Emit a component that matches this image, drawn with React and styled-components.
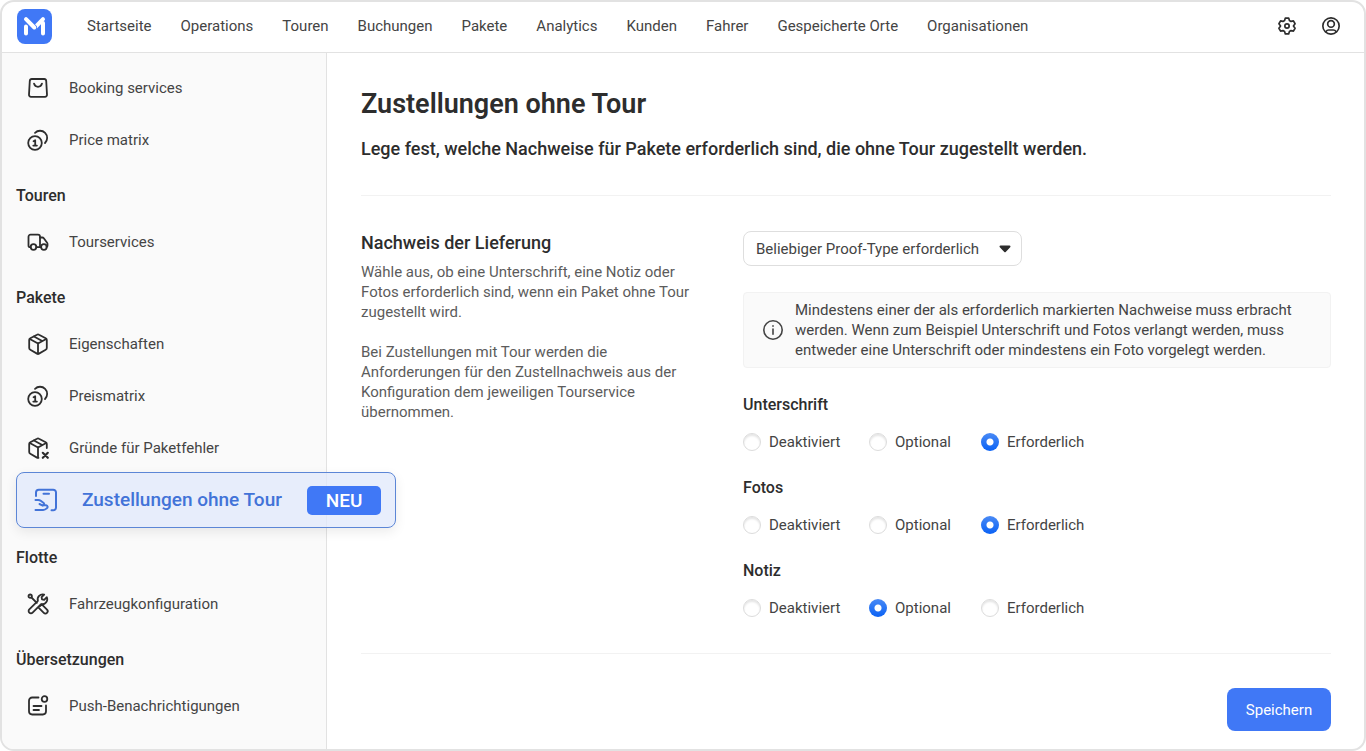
import React, {useState} from 'react'

// UI & CSS
import styled, {createGlobalStyle} from "styled-components";

const NAV_LINKS = [
  'Startseite', 'Operations', 'Touren', 'Buchungen', 'Pakete',
  'Analytics', 'Kunden', 'Fahrer', 'Gespeicherte Orte', 'Organisationen'
];

const PROOF_OPTIONS = ['Deaktiviert', 'Optional', 'Erforderlich'];

const Icon = ({size = 24, stroke = 1.8, children}) => (
  <IconSvg
    width={size}
    height={size}
    viewBox='0 0 24 24'
    strokeWidth={stroke}
    aria-hidden='true'
  >
    {children}
  </IconSvg>
)

const BagIcon = () => (
  <Icon>
    <path d='M5.800 3h12.400a2 2 0 0 1 2 1.800l.8 13.800a2 2 0 0 1-2 2.200H5a2 2 0 0 1-2-2.200l.8-13.800a2 2 0 0 1 2-1.800z'/>
    <path d='M8 7.600c.6 2 2 3.200 4 3.200s3.400-1.200 4-3.200'/>
  </Icon>
)

const CoinsIcon = () => (
  <Icon>
    <circle cx='9' cy='15' r='6.8'/>
    <path d='M9 4.800a6.800 6.800 0 1 1 10 10.200'/>
    <path d='M7.500 13.200l1.700-.9v5.300M7.300 17.600h3.600'/>
  </Icon>
)

const TruckIcon = () => (
  <Icon>
    <path d='M4.600 17.200h-.3a1.800 1.800 0 0 1-1.800-1.800V6.700a2 2 0 0 1 2-2H12a2 2 0 0 1 2 2v10.500M10.400 17.200h4.600'/>
    <path d='M14 7.500h2.200a2 2 0 0 1 1.600.8l3.300 4.400a2 2 0 0 1 .4 1.200v1.500a1.800 1.800 0 0 1-.9 1.600'/>
    <circle cx='7.5' cy='17' r='2.8'/>
    <circle cx='17.9' cy='17' r='2.8'/>
  </Icon>
)

const BoxIcon = () => (
  <Icon>
    <path d='M11 2.700a2 2 0 0 1 2 0l6.700 3.500a2 2 0 0 1 1.100 1.800v8a2 2 0 0 1-1.100 1.800L13 21.600a2 2 0 0 1-2 0l-6.700-3.800A2 2 0 0 1 3.200 16V8a2 2 0 0 1 1.100-1.800z'/>
    <path d='M3.800 7l8.200 4.500L20.200 7M12 11.500v10.200M8 4.500l8.200 4.500'/>
  </Icon>
)

const BoxFailedIcon = () => (
  <Icon>
    <path d='M20.800 12V8a2 2 0 0 0-1.100-1.800L13 2.700a2 2 0 0 0-2 0L4.300 6.200A2 2 0 0 0 3.200 8v8a2 2 0 0 0 1.100 1.800l6.700 3.800a2 2 0 0 0 1.500.2'/>
    <path d='M3.800 7l8.200 4.500L20.200 7M12 11.500v9.800M8 4.500l8.200 4.500'/>
    <path d='M16.800 16.800l5 5M21.800 16.800l-5 5' strokeWidth='2.2'/>
  </Icon>
)

const HandoverIcon = () => (
  <Icon stroke={2}>
    <path d='M2 8V4.500A2.800 2.800 0 0 1 4.800 1.700h14.400A2.800 2.800 0 0 1 22 4.500v15a2.800 2.800 0 0 1-2.800 2.800h-1.700'/>
    <path d='M9.500 5.800h5.500'/>
    <path d='M1.500 12h2.700c1 0 1.700.2 2.500.8l3 2.200a1.400 1.400 0 0 1-1.500 2.300L5.500 16'/>
    <path d='M8.500 17.200h3.600a1.700 1.700 0 0 1 .6 3.200c-1 1-2 1.500-3.500 1.500H1.500'/>
  </Icon>
)

const ToolsIcon = () => (
  <Icon>
    <circle cx='4.2' cy='4.2' r='1.7'/>
    <path d='M5.500 5.500l5.300 5.300'/>
    <path d='M14 14.200l1.800-1.800 5.200 5.300a2.200 2.200 0 0 1-3.200 3.200l-5-5'/>
    <path d='M20.800 5.200l-2.600 2.600-2.200-.4-.4-2.200 2.600-2.600a5 5 0 0 0-6.300 6.300l-8.600 8.500a2.300 2.300 0 0 0 3.300 3.300l8.500-8.600a5 5 0 0 0 5.700-6.900z'/>
  </Icon>
)

const NotificationIcon = () => (
  <Icon>
    <path d='M12.500 3.500H6.200A3.200 3.200 0 0 0 3 6.700v10.600a3.200 3.200 0 0 0 3.200 3.200h10.600a3.200 3.200 0 0 0 3.200-3.200V11.500'/>
    <circle cx='18.5' cy='5' r='2.8'/>
    <path d='M7.500 12h8M7.500 16h5.500'/>
  </Icon>
)

const GearIcon = () => (
  <Icon size={20} stroke={2}>
    <path d='M10 2.500h4l.9 2.900 1.900 1.100 2.900-.7 2 3.500-2 2.700 2 2.700-2 3.500-2.900-.7-1.900 1.100-.9 2.900h-4l-.9-2.900-1.900-1.100-2.900.7-2-3.500 2-2.700-2-2.700 2-3.500 2.900.7 1.900-1.100z'/>
    <circle cx='12' cy='12' r='2.6'/>
  </Icon>
)

const AccountIcon = () => (
  <Icon size={20} stroke={2}>
    <circle cx='12' cy='12' r='9.8'/>
    <circle cx='12' cy='9.5' r='4'/>
    <path d='M5.800 18.800c1-1.500 2-2 3.400-2h5.600c1.400 0 2.400.5 3.400 2'/>
  </Icon>
)

const InfoIcon = () => (
  <Icon stroke={1.6}>
    <circle cx='12' cy='12' r='9.2'/>
    <path d='M12 11v5.200M12 7.800v.4'/>
  </Icon>
)

const Logo = () => (
  <svg width='35' height='35' viewBox='0 0 35 35' role='img' aria-label='Logo'>
    <rect width='35' height='35' rx='8' fill='#4078f6'/>
    <g fill='none' stroke='#fff' strokeWidth='4' strokeLinecap='round'>
      <path d='M9 17.500v7M26 14v10.500'/>
      <path d='M18 18.500l8-8.300'/>
      <path d='M9 10.200l8 8.300' stroke='#4078f6' strokeWidth='6'/>
      <path d='M9 10.200l8.300 8.300'/>
    </g>
  </svg>
)

const SECTIONS = [
  {items: [
    {label: 'Booking services', icon: BagIcon},
    {label: 'Price matrix', icon: CoinsIcon}
  ]},
  {title: 'Touren', items: [
    {label: 'Tourservices', icon: TruckIcon}
  ]},
  {title: 'Pakete', items: [
    {label: 'Eigenschaften', icon: BoxIcon},
    {label: 'Preismatrix', icon: CoinsIcon},
    {label: 'Gründe für Paketfehler', icon: BoxFailedIcon},
    {label: 'Zustellungen ohne Tour', icon: HandoverIcon, active: true, badge: 'NEU'}
  ]},
  {title: 'Flotte', items: [
    {label: 'Fahrzeugkonfiguration', icon: ToolsIcon}
  ]},
  {title: 'Übersetzungen', items: [
    {label: 'Push-Benachrichtigungen', icon: NotificationIcon}
  ]}
];

const ProofField = ({title, name, value, onChange}) => (
  <ProofGroup>
    <ProofTitle>{title}</ProofTitle>
    <ProofOptions>
      {PROOF_OPTIONS.map(option => (
        <RadioLabel key={option}>
          <Radio
            type='radio'
            name={name}
            checked={value === option}
            onChange={() => onChange(name, option)}
          />
          {option}
        </RadioLabel>
      ))}
    </ProofOptions>
  </ProofGroup>
)

const App = () => {

  const [proofs, setProofs] = useState({
    signature: 'Erforderlich',
    photos: 'Erforderlich',
    note: 'Optional'
  });

  const changeProof = (name, option) => {
    setProofs({...proofs, [name]: option});
  }

  return (
    <>
      <GlobalStyle/>
      <Frame>
        <Header>
          <Logo/>
          <Nav>
            {NAV_LINKS.map(link => <a href='#' key={link}>{link}</a>)}
          </Nav>
          <HeaderActions>
            <IconButton aria-label='Einstellungen'><GearIcon/></IconButton>
            <IconButton aria-label='Konto'><AccountIcon/></IconButton>
          </HeaderActions>
        </Header>
        <Body>
          <Sidebar>
            {SECTIONS.map((section, index) => (
              <SidebarSection key={index}>
                {section.title && <SidebarTitle>{section.title}</SidebarTitle>}
                {section.items.map(({label, icon: ItemIcon, active, badge}) => (
                  <SidebarLink href='#' key={label} $active={active}>
                    <ItemIcon/>
                    {label}
                    {badge && <Badge>{badge}</Badge>}
                  </SidebarLink>
                ))}
              </SidebarSection>
            ))}
          </Sidebar>
          <Main>
            <PageTitle>Zustellungen ohne Tour</PageTitle>
            <PageLead>
              Lege fest, welche Nachweise für Pakete erforderlich sind, die ohne Tour zugestellt werden.
            </PageLead>
            <Settings>
              <div>
                <SettingsTitle>Nachweis der Lieferung</SettingsTitle>
                <Description>
                  Wähle aus, ob eine Unterschrift, eine Notiz oder Fotos erforderlich sind, wenn ein Paket ohne Tour zugestellt wird.
                </Description>
                <Description>
                  Bei Zustellungen mit Tour werden die Anforderungen für den Zustellnachweis aus der Konfiguration dem jeweiligen Tourservice übernommen.
                </Description>
              </div>
              <div>
                <SelectBox>
                  <Select aria-label='Nachweis der Lieferung'>
                    <option>Beliebiger Proof-Type erforderlich</option>
                  </Select>
                  <Caret width='12' height='8' viewBox='0 0 12 8' aria-hidden='true'>
                    <path d='M1.500.5h9a1 1 0 0 1 .7 1.700L6.700 7a1 1 0 0 1-1.400 0L.8 2.200A1 1 0 0 1 1.500.5z'/>
                  </Caret>
                </SelectBox>
                <Notice>
                  <InfoIcon/>
                  <NoticeText>
                    Mindestens einer der als erforderlich markierten Nachweise muss erbracht werden. Wenn zum Beispiel Unterschrift und Fotos verlangt werden, muss entweder eine Unterschrift oder mindestens ein Foto vorgelegt werden.
                  </NoticeText>
                </Notice>
                <ProofField title='Unterschrift' name='signature' value={proofs.signature} onChange={changeProof}/>
                <ProofField title='Fotos' name='photos' value={proofs.photos} onChange={changeProof}/>
                <ProofField title='Notiz' name='note' value={proofs.note} onChange={changeProof}/>
              </div>
            </Settings>
            <Footer>
              <SaveButton>Speichern</SaveButton>
            </Footer>
          </Main>
        </Body>
      </Frame>
    </>
  )
}

export default App;

const GlobalStyle = createGlobalStyle`
  * {
    box-sizing: border-box;
  }

  body {
    margin: 0;
    background-color: #ffffff;
    color: #444444;
    font-family: Roboto, "Liberation Sans", sans-serif;
    font-size: 15px;
    line-height: 20px;
  }

  a {
    color: inherit;
    text-decoration: none;
  }

  button, select {
    font: inherit;
    color: inherit;
  }
`;

const IconSvg = styled.svg`
  flex: none;
  fill: none;
  stroke: currentColor;
  stroke-linecap: round;
  stroke-linejoin: round;
`;

const Frame = styled.div`
  display: flex;
  flex-direction: column;
  min-height: 100vh;
  border: 2px solid #e2e2e2;
  border-radius: 14px;
`;

const Header = styled.header`
  display: flex;
  align-items: center;
  height: 51px;
  padding: 0 21px 2px 15px;
  border-bottom: 1px solid #e2e2e2;
`;

const Nav = styled.nav`
  display: flex;
  gap: 29px;
  margin-left: 35px;
  white-space: nowrap;
`;

const HeaderActions = styled.div`
  display: flex;
  gap: 20px;
  margin-left: auto;
`;

const IconButton = styled.button`
  display: flex;
  padding: 2px;
  border: none;
  background: none;
  color: #2d2d2d;
  cursor: pointer;
`;

const Body = styled.div`
  display: flex;
  flex: 1;
`;

const Sidebar = styled.aside`
  flex: none;
  width: 325px;
  padding: 9px 14px 0;
  border-right: 1px solid #e2e2e2;
  border-bottom-left-radius: 12px;
  background-color: #fafafa;
`;

const SidebarSection = styled.section`
  margin-bottom: 10px;
`;

const SidebarTitle = styled.h2`
  margin: 0;
  color: #2d2d2d;
  font-size: 16px;
  font-weight: 500;
  line-height: 40px;
`;

const SidebarLink = styled.a`
  display: flex;
  align-items: center;
  gap: 19px;
  height: 52px;
  padding-left: 10px;

  svg {
    color: #2d2d2d;
  }

  ${({$active}) => $active && `
    position: relative;
    gap: 24px;
    width: 380px;
    height: 56px;
    margin-top: -2px;
    padding: 0 14px 0 17px;
    border: 1px solid #5c86d6;
    border-radius: 8px;
    background-color: rgba(224, 232, 251, 0.75);
    box-shadow: 0 4px 12px rgba(0, 0, 0, 0.08);
    color: #4273d8;
    font-size: 19px;
    font-weight: 500;
    white-space: nowrap;

    svg {
      color: #4273d8;
    }
  `}
`;

const Badge = styled.span`
  flex: none;
  width: 74px;
  margin-left: auto;
  border-radius: 5px;
  background-color: #4078f6;
  color: #ffffff;
  line-height: 29px;
  text-align: center;
`;

const Main = styled.main`
  flex: 1;
  min-width: 0;
  padding: 34px 33px 18px 34px;
`;

const PageTitle = styled.h1`
  margin: 0;
  color: #2d2d2d;
  font-size: 27px;
  font-weight: 600;
  line-height: 34px;
`;

const PageLead = styled.p`
  margin: 16px 0 34px;
  color: #2d2d2d;
  font-size: 18px;
  font-weight: 500;
  line-height: 24px;
`;

const Settings = styled.section`
  display: grid;
  grid-template-columns: 338fr 588fr;
  gap: 44px;
  padding: 35px 0;
  border-top: 1px solid #f2f2f2;
  border-bottom: 1px solid #f2f2f2;
`;

const SettingsTitle = styled.h2`
  margin: 0 0 7px;
  color: #2d2d2d;
  font-size: 18px;
  font-weight: 500;
  line-height: 24px;
`;

const Description = styled.p`
  margin: 0 0 20px;
  color: #5c5c5c;
`;

const SelectBox = styled.div`
  position: relative;
  width: 279px;
  margin-bottom: 26px;
`;

const Select = styled.select`
  display: block;
  width: 100%;
  height: 35px;
  padding: 0 28px 0 12px;
  border: 1px solid #dedede;
  border-radius: 8px;
  background-color: #ffffff;
  appearance: none;
`;

const Caret = styled.svg`
  position: absolute;
  top: 14px;
  right: 11px;
  fill: #2d2d2d;
  pointer-events: none;
`;

const Notice = styled.div`
  display: flex;
  align-items: center;
  gap: 10px;
  margin-bottom: 27px;
  padding: 7px 17px;
  border: 1px solid #f2f2f2;
  border-radius: 4px;
  background-color: #fafafa;
`;

const NoticeText = styled.p`
  margin: 0;
`;

const ProofGroup = styled.fieldset`
  margin: 0;
  padding: 0;
  border: none;

  & + & {
    margin-top: 26px;
  }
`;

const ProofTitle = styled.legend`
  padding: 0;
  margin-bottom: 17px;
  color: #2d2d2d;
  font-size: 16px;
  font-weight: 500;
`;

const ProofOptions = styled.div`
  display: grid;
  grid-template-columns: 126px 112px auto;
`;

const RadioLabel = styled.label`
  display: flex;
  align-items: center;
  gap: 8px;
`;

const Radio = styled.input`
  width: 18px;
  height: 18px;
  margin: 0;
  border: 1px solid #dcdcdc;
  border-radius: 50%;
  background-color: #ffffff;
  box-shadow: inset 0 2px 2px rgba(0, 0, 0, 0.1);
  appearance: none;

  &:checked {
    border: none;
    background: radial-gradient(circle, #ffffff 3px, transparent 4px), linear-gradient(#4a8af5, #0a62f5);
    box-shadow: none;
  }
`;

const Footer = styled.footer`
  display: flex;
  justify-content: flex-end;
  padding-top: 34px;
`;

const SaveButton = styled.button`
  min-width: 104px;
  height: 43px;
  padding: 0 16px;
  border: none;
  border-radius: 8px;
  background-color: #4078f6;
  color: #ffffff;
  cursor: pointer;
`;
